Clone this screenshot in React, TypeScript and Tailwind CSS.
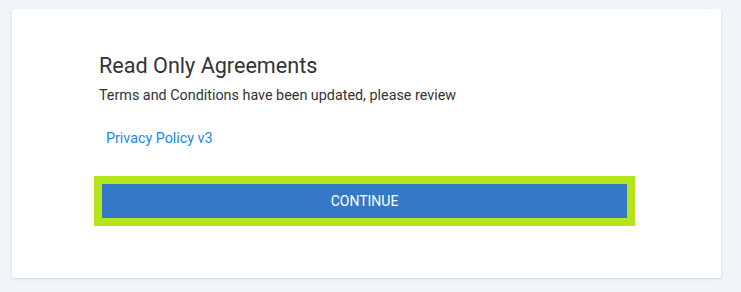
export default function App() {
  return (
    <div className="min-h-screen bg-[#f0f5f9] pt-[9px] px-[12px] font-['Roboto',sans-serif]">
      <div className="w-[709px] h-[269px] bg-white rounded-[3px] shadow-[0_1px_3px_rgba(0,0,0,0.12)] pt-[44px] pl-[82px]">
        <div className="w-[541px]">
          <h3 className="pl-[5px] text-[21.6px] leading-[26px] text-[#333333]">Read Only Agreements</h3>
          <p className="mt-[7px] pl-[5px] text-[14.35px] leading-[20px] text-[#333333]">
            Terms and Conditions have been updated, please review
          </p>
          <div className="mt-[20px] pl-[12px]">
            <a className="text-[14.3px] leading-[20px] text-[#1a88e8] cursor-pointer">Privacy Policy v3</a>
          </div>
          <div className="mt-[26px] border-[8px] border-[#b4e51b]">
            <button
              type="button"
              className="w-full h-[34px] bg-[#3578c6] text-white text-[14px] uppercase flex items-center justify-center"
            >
              Continue
            </button>
          </div>
        </div>
      </div>
    </div>
  );
}
